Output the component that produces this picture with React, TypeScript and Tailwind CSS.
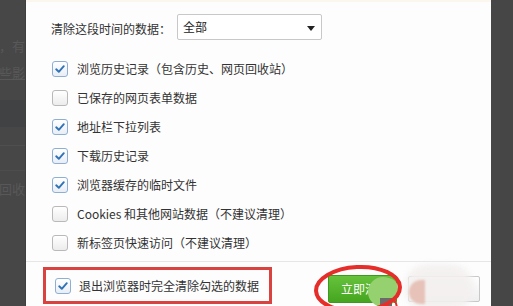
import React from "react";

const items: { label: string; checked: boolean }[] = [
  { label: "浏览历史记录（包含历史、网页回收站）", checked: true },
  { label: "已保存的网页表单数据", checked: false },
  { label: "地址栏下拉列表", checked: true },
  { label: "下载历史记录", checked: true },
  { label: "浏览器缓存的临时文件", checked: true },
  { label: "Cookies 和其他网站数据（不建议清理）", checked: false },
  { label: "新标签页快速访问（不建议清理）", checked: false },
];

function Box({ checked }: { checked: boolean }) {
  return checked ? (
    <div className="w-[16px] h-[16px] shrink-0 rounded-[3px] border border-[#8eaed3] bg-gradient-to-b from-[#ffffff] to-[#e9eef5] flex items-center justify-center">
      <svg width="12" height="12" viewBox="0 0 12 12">
        <polyline points="2.2,6.3 4.8,8.8 9.8,3.2" fill="none" stroke="#2f73b6" strokeWidth="1.9" strokeLinecap="round" strokeLinejoin="round" />
      </svg>
    </div>
  ) : (
    <div className="w-[16px] h-[16px] shrink-0 rounded-[3px] border border-[#b9b9b9] bg-gradient-to-b from-[#ffffff] to-[#ececec]" />
  );
}

export default function App() {
  return (
    <div className="w-[513px] h-[306px] flex overflow-hidden bg-[#474747] font-['Noto_Sans_CJK_SC','Noto_Sans',sans-serif] text-[12px] text-[#333333]">
      {/* left dimmed page */}
      <div className="w-[26px] shrink-0 flex flex-col overflow-hidden text-[13px] text-[#585858] border-r border-[#3f3f3f]">
        <div className="h-[38px]" />
        <div className="h-[16px] flex justify-end whitespace-nowrap leading-[16px]">]，有</div>
        <div className="h-[11px]" />
        <div className="h-[16px] flex justify-end whitespace-nowrap leading-[16px] underline decoration-[#585858]">些影</div>
        <div className="h-[19px]" />
        <div className="h-[27px] bg-[#404244]" />
        <div className="h-[18px]" />
        <div className="h-px bg-[#4f4f4f]" />
        <div className="h-[24px]" />
        <div className="h-px bg-[#4d4d4d]" />
        <div className="h-[10px]" />
        <div className="h-[16px] flex justify-end whitespace-nowrap leading-[16px]">回收</div>
      </div>

      {/* dialog */}
      <div className="relative w-[465px] shrink-0 bg-[#fdfdfd] flex flex-col border-t-[2px] border-[#fbf7ee]">
        <div className="mt-[12px] h-[26px] flex items-center pl-[25px]">
          <span className="mt-[3px]">清除这段时间的数据：</span>
          <div className="ml-[6px] w-[145px] h-[26px] border border-[#c8c8c8] rounded-[2px] bg-white flex items-center pl-[5px] pr-[6px]">
            <span className="flex-1 text-[#222]">全部</span>
            <svg width="8" height="5" viewBox="0 0 8 5" className="mt-[3px]">
              <polygon points="0,0 8,0 4,5" fill="#222" />
            </svg>
          </div>
        </div>

        <div className="mt-[14px] flex flex-col pl-[26px]">
          {items.map((it) => (
            <div key={it.label} className="h-[29px] flex items-center gap-[9px]">
              <Box checked={it.checked} />
              <span className="whitespace-nowrap">{it.label}</span>
            </div>
          ))}
        </div>

        <div className="mt-[4px] h-px bg-[#e6e6e6]" />

        <div className="mt-[5px] flex items-start">
          <div className="ml-[17px] w-[229px] h-[37px] border-[3px] border-[#d9423f] flex items-center pl-[9px] gap-[8px]">
            <Box checked={true} />
            <span className="whitespace-nowrap">退出浏览器时完全清除勾选的数据</span>
          </div>
          <div className="ml-[56px] mt-[8px] w-[69px] h-[28px] rounded-[2px] border border-[#3c9a1c] bg-gradient-to-b from-[#66c23a] to-[#45a51f] text-white flex items-center pl-[12px] whitespace-nowrap overflow-hidden">
            立即清除
          </div>
          <div className="ml-[11px] mt-[9px] w-[72px] h-[26px] rounded-[2px] border border-[#c6c6c6] bg-gradient-to-b from-[#ffffff] to-[#efefef]" />
        </div>

        {/* blurred blobs */}
        <div className="absolute left-[342px] top-[275px] w-[30px] h-[30px] rounded-full bg-[#96d16f]" />
        <div className="absolute left-[354px] top-[296px] w-[12px] h-[10px] bg-[#6b6b6b]" />
        <div className="absolute left-[346px] top-[276px] w-[26px] h-[20px] rounded-full bg-[#96d16f]" />
        <div className="absolute left-[378px] top-[262px] w-[70px] h-[48px] rounded-full bg-[#f3f0ef] blur-[3px] opacity-90" />
        <div className="absolute left-[383px] top-[278px] w-[16px] h-[24px] rounded-l-full bg-[#e6c2b8] blur-[1px]" />

        {/* red ellipse annotation */}
        <svg className="absolute left-[286px] top-[258px]" width="95" height="52" viewBox="0 0 95 52">
          <ellipse cx="46" cy="29" rx="42" ry="22" fill="none" stroke="#e52e2a" strokeWidth="4" transform="rotate(-3 46 29)" />
          <path d="M82 40 Q86 44 84 50" fill="none" stroke="#e52e2a" strokeWidth="2" />
        </svg>
      </div>

      {/* right dimmed page */}
      <div className="flex-1 bg-[#464646]" />
    </div>
  );
}
